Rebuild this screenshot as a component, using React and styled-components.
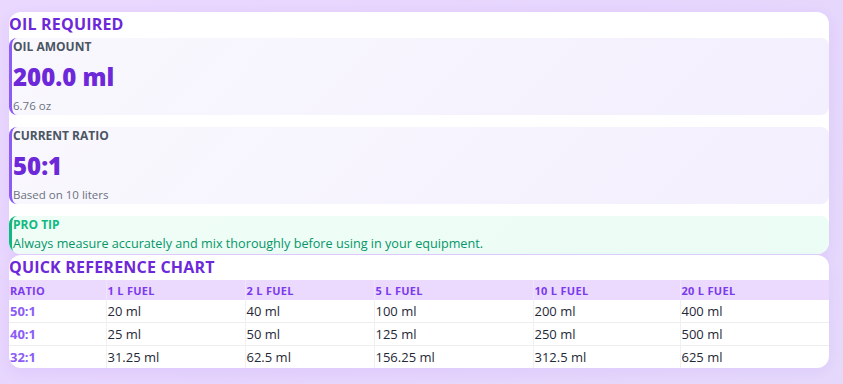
import React from "react";
import styled, { createGlobalStyle } from "styled-components";

const GlobalStyle = createGlobalStyle`
  html, body {
    margin: 0;
    padding: 0;
    height: 100%;
  }
  body {
    font-family: "Open Sans", "Noto Sans", sans-serif;
    background: linear-gradient(135deg, #ead8ff 0%, #e6d5fd 50%, #e5d9fb 100%);
    min-height: 384px;
  }
`;

const Page = styled.div`
  display: flex;
  flex-direction: column;
  gap: 1px;
  padding: 12px 14px 0 9px;
`;

const Card = styled.section`
  background: #ffffff;
  border-radius: 12px;
  box-shadow: 0 4px 14px rgba(124, 58, 237, 0.08);
  overflow: hidden;
`;

const Title = styled.h2`
  margin: 0;
  font-size: 16px;
  line-height: 25px;
  font-weight: 700;
  letter-spacing: 0.2px;
  color: #6d28d9;
  text-transform: uppercase;
`;

const Stack = styled.div`
  display: flex;
  flex-direction: column;
  gap: 12px;
  margin-top: 1px;
`;

const StatBox = styled.div`
  background: ${(p) =>
    p.$tone === "green"
      ? "linear-gradient(135deg, #effdf6 0%, #ecfdf5 100%)"
      : "linear-gradient(135deg, #f9f8fd 0%, #f3effe 100%)"};
  border-left: 3px solid ${(p) => (p.$tone === "green" ? "#10b981" : "#8b5cf6")};
  border-radius: 8px;
  padding: 0 0 1px 1px;
`;

const Label = styled.div`
  font-size: 12px;
  line-height: 18px;
  font-weight: 700;
  text-transform: uppercase;
  color: ${(p) => (p.$tone === "green" ? "#10b981" : "#4b5563")};
`;

const Value = styled.div`
  font-size: 24px;
  line-height: 36px;
  font-weight: 800;
  color: #6d28d9;
  margin: 3px 0 2px;
`;

const Sub = styled.div`
  font-size: 11.5px;
  line-height: 17px;
  font-weight: 500;
  color: #6b7280;
`;

const TipText = styled.div`
  font-size: 12.65px;
  line-height: 19px;
  font-weight: 500;
  color: #059669;
`;

const Table = styled.table`
  width: 100%;
  border-collapse: collapse;
  table-layout: fixed;
`;

const HeadCell = styled.th`
  background: #ebdafd;
  color: #7c3aed;
  font-size: 11px;
  font-weight: 700;
  text-transform: uppercase;
  text-align: left;
  height: 20px;
  padding: 0 1px;
  letter-spacing: 0.3px;
  border-right: 1px solid #efe6fd;
  &:last-child {
    border-right: none;
  }
`;

const Cell = styled.td`
  font-size: 13px;
  line-height: 20px;
  height: 22px;
  padding: 0 1px;
  color: ${(p) => (p.$ratio ? "#8b5cf6" : "#1f2937")};
  font-weight: ${(p) => (p.$ratio ? 700 : 500)};
  border-right: 1px solid #f0f0f0;
  &:last-child {
    border-right: none;
  }
`;

const Row = styled.tr`
  border-bottom: 1px solid #eeeeee;
  &:last-child {
    border-bottom: none;
  }
`;

const columns = [
  { label: "Ratio", width: 97 },
  { label: "1 L Fuel", width: 139 },
  { label: "2 L Fuel", width: 129 },
  { label: "5 L Fuel", width: 159 },
  { label: "10 L Fuel", width: 147 },
  { label: "20 L Fuel", width: 149 },
];

const rows = [
  ["50:1", "20 ml", "40 ml", "100 ml", "200 ml", "400 ml"],
  ["40:1", "25 ml", "50 ml", "125 ml", "250 ml", "500 ml"],
  ["32:1", "31.25 ml", "62.5 ml", "156.25 ml", "312.5 ml", "625 ml"],
];

export default function App() {
  return (
    <>
      <GlobalStyle />
      <Page>
        <Card>
          <Title>Oil Required</Title>
          <Stack>
            <StatBox>
              <Label>Oil Amount</Label>
              <Value>200.0 ml</Value>
              <Sub>6.76 oz</Sub>
            </StatBox>
            <StatBox>
              <Label>Current Ratio</Label>
              <Value>50:1</Value>
              <Sub>Based on 10 liters</Sub>
            </StatBox>
            <StatBox $tone="green">
              <Label $tone="green">Pro Tip</Label>
              <TipText>
                Always measure accurately and mix thoroughly before using in your equipment.
              </TipText>
            </StatBox>
          </Stack>
        </Card>
        <Card>
          <Title>Quick Reference Chart</Title>
          <Table>
            <colgroup>
              {columns.map((c) => (
                <col key={c.label} style={{ width: c.width }} />
              ))}
            </colgroup>
            <thead>
              <tr>
                {columns.map((c) => (
                  <HeadCell key={c.label}>{c.label}</HeadCell>
                ))}
              </tr>
            </thead>
            <tbody>
              {rows.map((r) => (
                <Row key={r[0]}>
                  {r.map((v, i) => (
                    <Cell key={i} $ratio={i === 0}>
                      {v}
                    </Cell>
                  ))}
                </Row>
              ))}
            </tbody>
          </Table>
        </Card>
      </Page>
    </>
  );
}
